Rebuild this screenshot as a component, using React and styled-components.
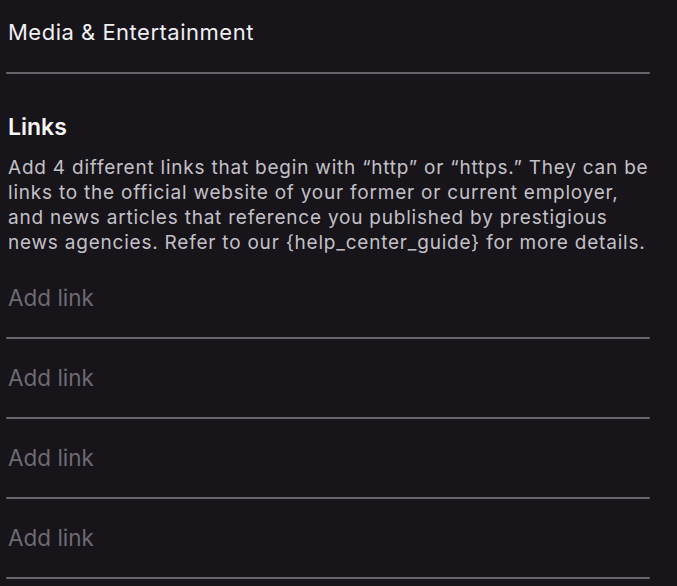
import React from 'react';
import styled, { createGlobalStyle } from 'styled-components';

// global:

const GlobalStyle = createGlobalStyle`
    html, body {
        margin: 0;
        padding: 0;
        background-color: #17141a;
    }
    body {
        font-family: Inter, "Noto Sans", "Liberation Sans", sans-serif;
        -webkit-font-smoothing: antialiased;
    }
`;

// component:

const fields = ['Add link', 'Add link', 'Add link', 'Add link'];

const App = () => (
    <Page>
        <GlobalStyle />
        <Title>Media &amp; Entertainment</Title>
        <Divider />
        <Heading>Links</Heading>
        <Description>
            Add 4 different links that begin with “http” or “https.” They can be
            links to the official website of your former or current employer,
            and news articles that reference you published by prestigious
            news agencies. Refer to our {'{help_center_guide}'} for more details.
        </Description>
        <Fields>
            {fields.map((placeholder, i) => (
                <Field key={i}>
                    <Input placeholder={placeholder} />
                    <Divider />
                </Field>
            ))}
        </Fields>
    </Page>
);

// styled components:

const Page = styled.div`
    width: 677px;
    height: 586px;
    box-sizing: border-box;
    padding-left: 6px;
    overflow: hidden;
    background-color: #17141a;
    display: flex;
    flex-direction: column;
    & > * {
        flex-shrink: 0;
    }
`;

const Title = styled.div`
    width: 644px;
    padding: 19px 0 0 2px;
    height: 26px;
    margin-bottom: 27px;
    font-size: 22px;
    line-height: 26px;
    color: #f0eff2;
    letter-spacing: 0.5px;
`;

const Divider = styled.div`
    flex-shrink: 0;
    width: 644px;
    height: 2px;
    background-color: #67646b;
    border-radius: 1px;
`;

const Heading = styled.div`
    margin-top: 40px;
    padding-left: 2px;
    font-size: 23px;
    font-weight: 600;
    line-height: 26px;
    color: #f6f5f8;
`;

const Description = styled.p`
    width: 646px;
    margin: 15px 0 0 0;
    padding-left: 2px;
    font-size: 19px;
    line-height: 25px;
    color: #c3c1c7;
    letter-spacing: 0.78px;
`;

const Fields = styled.div`
    margin-top: 4px;
    display: flex;
    flex-direction: column;
`;

const Field = styled.div`
    display: flex;
    flex-direction: column;
`;

const Input = styled.input`
    height: 26px;
    margin: 26px 0;
    padding: 0 0 0 2px;
    width: 640px;
    border: none;
    outline: none;
    background: transparent;
    font-family: inherit;
    font-size: 22.5px;
    line-height: 26px;
    color: #e6e4ea;
    &::placeholder {
        color: #6e6b72;
    }
`;

export default App;
